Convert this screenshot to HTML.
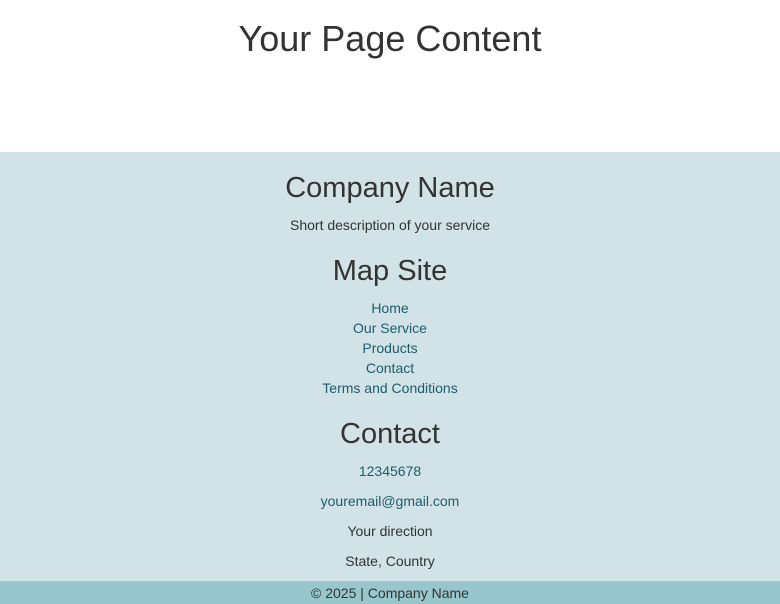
<!DOCTYPE html>
<html><head><meta charset="utf-8"><style>
body{margin:0;width:780px;height:604px;position:relative;background:#fff;font-family:"Liberation Sans",sans-serif;color:#333;overflow:hidden}
.c{position:absolute;left:0;width:780px;text-align:center;white-space:nowrap;line-height:1}
.ft{position:absolute;left:0;top:152px;width:780px;height:429px;background:#d1e3e6}
.bt{position:absolute;left:0;top:581px;width:780px;height:23px;background:#97c6cc}
.l{color:#1d5c6c;font-size:14px}
.s{font-size:14px;color:#333}
</style></head><body>
<div class="c" style="top:21px;font-size:36px">Your Page Content</div>
<div class="ft"></div>
<div class="bt"></div>
<div class="c" style="top:174px;font-size:29px">Company Name</div>
<div class="c s" style="top:218px">Short description of your service</div>
<div class="c" style="top:257px;font-size:29px">Map Site</div>
<div class="c l" style="top:301px">Home</div>
<div class="c l" style="top:321px">Our Service</div>
<div class="c l" style="top:341px">Products</div>
<div class="c l" style="top:361px">Contact</div>
<div class="c l" style="top:381px">Terms and Conditions</div>
<div class="c" style="top:420px;font-size:29px">Contact</div>
<div class="c l" style="top:464px">12345678</div>
<div class="c l" style="top:494px">youremail@gmail.com</div>
<div class="c s" style="top:524px">Your direction</div>
<div class="c s" style="top:554px">State, Country</div>
<div class="c s" style="top:586px">© 2025 | Company Name</div>
</body></html>
